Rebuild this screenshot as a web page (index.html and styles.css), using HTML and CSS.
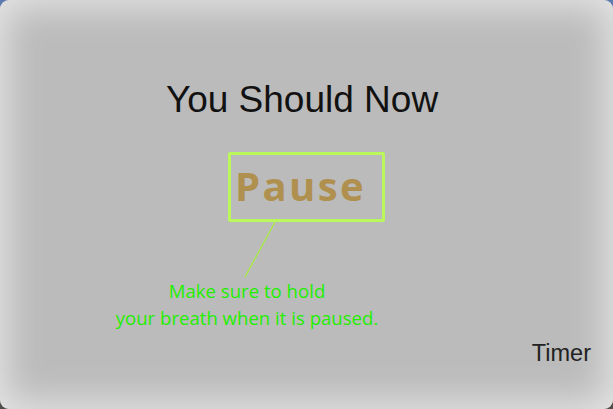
FILE: index.html
```html
<!DOCTYPE html>
<html>
<head>
<meta charset="utf-8">
<link rel="stylesheet" href="styles.css">
</head>
<body>
<div class="card">
  <h1 class="title">You Should Now</h1>
  <div class="pause-box"><span class="pause">Pause</span></div>
  <svg class="connector" width="40" height="56" viewBox="0 0 40 56"><line x1="35" y1="0" x2="5" y2="55" stroke="#a6f03a" stroke-width="1.2"/></svg>
  <p class="note">Make sure to hold<br>your breath when it is paused.</p>
  <div class="timer">Timer</div>
</div>
</body>
</html>
```
FILE: styles.css
```css
html, body {
  margin: 0;
  padding: 0;
}
body {
  width: 613px;
  height: 409px;
  background: linear-gradient(to bottom, #5b7bb0 0%, #5b7bb0 50%, #4f4c4a 50%, #4f4c4a 100%);
  overflow: hidden;
}
.card {
  width: 613px;
  height: 409px;
  box-sizing: border-box;
  border-radius: 9px;
  background: #bbbbbb;
  box-shadow: inset 0 0 36px 6px #e6e6e6;
  padding-top: 80px;
  display: flex;
  flex-direction: column;
}
.title {
  margin: 0;
  padding-right: 9px;
  text-align: center;
  font-family: "Liberation Sans", Arial, sans-serif;
  font-weight: 400;
  font-size: 37px;
  line-height: 40px;
  color: #111;
}
.pause-box {
  margin: 32px 0 0 228px;
  width: 157px;
  height: 70px;
  box-sizing: border-box;
  border: 3px solid #b9f75a;
  border-radius: 2px;
  padding: 7px 0 0 4px;
}
.pause {
  font-family: "Open Sans", "DejaVu Sans", sans-serif;
  font-weight: 700;
  font-size: 40px;
  line-height: 48px;
  letter-spacing: 2.4px;
  color: #b0904e;
}
.connector {
  display: block;
  margin-left: 240px;
}
.note {
  margin: -1px 0 0;
  width: 494px;
  text-align: center;
  font-family: "Open Sans", "Noto Sans", sans-serif;
  font-size: 18.6px;
  line-height: 27px;
  color: #22ee00;
}
.timer {
  align-self: flex-end;
  margin: 9px 22px 0 0;
  font-family: "Liberation Sans", Arial, sans-serif;
  font-size: 23.5px;
  line-height: 26px;
  color: #222;
}
```
